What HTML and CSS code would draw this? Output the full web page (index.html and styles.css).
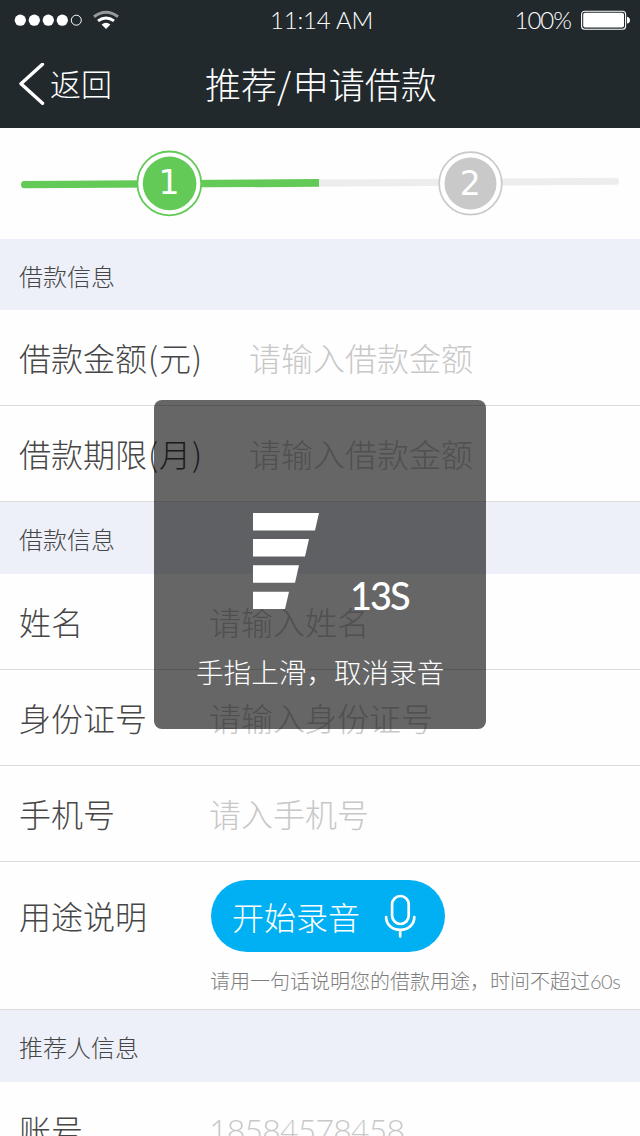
FILE: index.html
```html
<!DOCTYPE html>
<html lang="zh-CN">
<head>
<meta charset="utf-8">
<title>推荐/申请借款</title>
<link rel="stylesheet" href="styles.css">
</head>
<body>
<div class="screen">
  <header class="header">
    <div class="status">
      <div class="signal">
        <svg width="70" height="14" viewBox="0 0 70 14"><g fill="#fff"><circle cx="6.3" cy="7.2" r="5.6"/><circle cx="20.3" cy="7.2" r="5.6"/><circle cx="34.3" cy="7.2" r="5.6"/><circle cx="48.3" cy="7.2" r="5.6"/></g><circle cx="62.3" cy="7.2" r="5" fill="none" stroke="#fff"/></svg>
        <svg class="wifi" width="28" height="20" viewBox="0 0 28 20" fill="none"><path d="M2 6.8Q14-2.3 26 6.8" stroke="#969a9c" stroke-width="3"/><path d="M6 10.9Q14 5.1 22 10.9" stroke="#fff" stroke-width="3"/><path d="M9.6 14.5Q14 11.1 18.4 14.5L14 19.1Z" fill="#fff"/></svg>
      </div>
      <span class="clock">11:14 AM</span>
      <div class="power"><span>100%</span>
        <svg width="50" height="20" viewBox="0 0 50 20"><rect x=".6" y="1.2" width="44" height="18" rx="3" fill="none" stroke="#fff" stroke-width="1.1"/><rect x="2.2" y="2.8" width="40.8" height="14.8" rx="2" fill="#fff"/><path d="M46 6.8Q49 7.6 49 10.2T46 13.6Z" fill="#fff"/></svg>
      </div>
    </div>
    <nav class="nav">
      <div class="back"><svg width="26" height="43" viewBox="0 0 26 43"><path d="M23.5 1.3L2 20.7L23.5 40.3" fill="none" stroke="#fff" stroke-width="3.4" stroke-linecap="round" stroke-linejoin="round"/></svg><span>返回</span></div>
      <h1 class="title">推荐<span class="slash">/</span>申请借款</h1>
    </nav>
  </header>

  <div class="steps">
    <svg width="640" height="111" viewBox="0 0 640 111">
      <path d="M319 51.5L616 49.8Q619 50 619 53.4T616 56.8L319 58.7Z" fill="#ededed"/>
      <path d="M319 51L24 53Q21 53 21 56.5T24 60.3L319 58.8Z" fill="#63c957"/>
      <circle cx="169.3" cy="55.4" r="31.9" fill="#fff" stroke="#63c957" stroke-width="1.8"/>
      <circle cx="169.6" cy="55.4" r="26.8" fill="#63c957"/>
      <circle cx="470.5" cy="55.4" r="31.3" fill="#fff" stroke="#c9c9c9" stroke-width="1.7"/>
      <circle cx="470.5" cy="55.4" r="26" fill="#c9c9c9"/>
      <text class="step-number" x="169" y="66">1</text>
      <text class="step-number" x="470.3" y="67">2</text>
    </svg>
  </div>

  <h2 class="section section-first">借款信息</h2>
  <div class="row wide"><span class="label">借款金额<span class="unit">(元)</span></span><span class="hint">请输入借款金额</span></div>
  <div class="row wide"><span class="label">借款期限<span class="unit">(月)</span></span><span class="hint">请输入借款金额</span></div>

  <h2 class="section">借款信息</h2>
  <div class="row"><span class="label">姓名</span><span class="hint">请输入姓名</span></div>
  <div class="row"><span class="label">身份证号</span><span class="hint">请输入身份证号</span></div>
  <div class="row"><span class="label">手机号</span><span class="hint">请入手机号</span></div>
  <div class="row purpose">
    <span class="label">用途说明</span>
    <div class="record">
      <div class="record-button"><span>开始录音</span>
        <svg width="32" height="46" viewBox="0 0 32 46" fill="none" stroke="#fff" stroke-width="2.7" stroke-linecap="round"><rect x="8.1" y="3" width="16.6" height="28" rx="8.3"/><path d="M2.1 24C2.1 31.5 8 36.8 16.2 36.8S30.3 31.5 30.3 24M16.2 37.5V43.5"/></svg>
      </div>
      <p class="note">请用一句话说明您的借款用途，时间不超过<span class="note-time">60s</span></p>
    </div>
  </div>

  <h2 class="section">推荐人信息</h2>
  <div class="row"><span class="label">账号</span><span class="hint number">18584578458</span></div>

  <div class="toast">
    <div class="meter">
      <svg width="68" height="97" viewBox="0 0 68 97" fill="#fff"><path d="M0 0H66L62 17.5H0ZM0 26H56L52 43.5H0ZM0 52.3H46L42 69.7H0ZM0 78.7H36L32 96H0Z"/></svg>
      <span class="seconds">13S</span>
    </div>
    <p class="toast-text">手指上滑，取消录音</p>
  </div>
</div>
</body>
</html>
```

FILE: styles.css
```css
* { box-sizing: border-box; margin: 0; padding: 0; }
html, body { overflow: hidden; }
body { font-family: "Noto Sans CJK SC", sans-serif; font-weight: 300; color: #464646; background: #fff; }
svg { display: block; flex: none; }
.screen { position: relative; width: 640px; height: 1136px; overflow: hidden; background: #fefefe; }

.header { height: 128px; background: #22292c; color: #fff; }
.status { display: grid; grid-template-columns: 1fr auto 1fr; height: 40px; align-items: center; font-family: Lato, sans-serif; font-size: 24px; line-height: 40px; }
.signal { display: flex; align-items: center; padding-left: 14px; }
.wifi { margin-left: 8px; }
.clock { padding-left: 3px; letter-spacing: -0.2px; }
.power { display: flex; justify-content: flex-end; align-items: center; gap: 10px; padding-right: 9px; letter-spacing: -1px; }
.nav { display: grid; grid-template-columns: 205px auto; height: 88px; align-items: center; }
.back { display: flex; align-items: center; gap: 5px; padding-left: 19px; font-size: 31px; line-height: 86px; }
.back span { padding-bottom: 2px; }
.title { padding-bottom: 2px; font-size: 36px; font-weight: 300; line-height: 86px; }
.slash { letter-spacing: 1.5px; }

.steps { height: 111px; }
.step-number { fill: #fff; font-family: "DejaVu Sans", sans-serif; font-size: 33px; font-weight: 400; text-anchor: middle; }

.section { height: 72px; padding: 1px 19px 0; background: #edf0f8; font-size: 24px; font-weight: 300; line-height: 72px; }
.section-first { height: 71px; }
.row { display: grid; grid-template-columns: 190px 1fr; align-items: center; height: 96px; padding-left: 19px; border-bottom: 1px solid #dcdcdc; font-size: 32px; line-height: 95px; white-space: nowrap; }
.wide { grid-template-columns: 230px 1fr; }
.unit { padding-left: 1px; letter-spacing: 1px; }
.hint { color: #c8c8c8; }
.number { font-family: Lato, sans-serif; font-size: 32px; letter-spacing: -0.8px; }

.purpose { height: 148px; align-items: start; }
.purpose .label { line-height: 107px; }
.record { padding: 18px 0 0 2px; }
.record-button { display: flex; align-items: center; width: 234px; height: 72px; padding-left: 21px; gap: 24px; border-radius: 36px; background: #00b0f3; color: #fff; line-height: 72px; }
.note { margin-left: -1px; font-size: 20px; line-height: 57px; color: #7d7d7d; }
.note-time { font-family: Lato, sans-serif; letter-spacing: -0.5px; }

.toast { position: absolute; left: 154px; top: 400px; width: 332px; height: 329px; border-radius: 8px; background: rgba(0, 0, 0, .6); color: #fff; }
.meter { display: flex; align-items: flex-end; gap: 29px; height: 210px; padding-left: 99px; }
.seconds { font-family: Lato, sans-serif; font-size: 38px; font-weight: 500; line-height: 29px; letter-spacing: -2px; }
.toast-text { padding-left: 42px; font-size: 27.6px; line-height: 123px; white-space: nowrap; }
```
